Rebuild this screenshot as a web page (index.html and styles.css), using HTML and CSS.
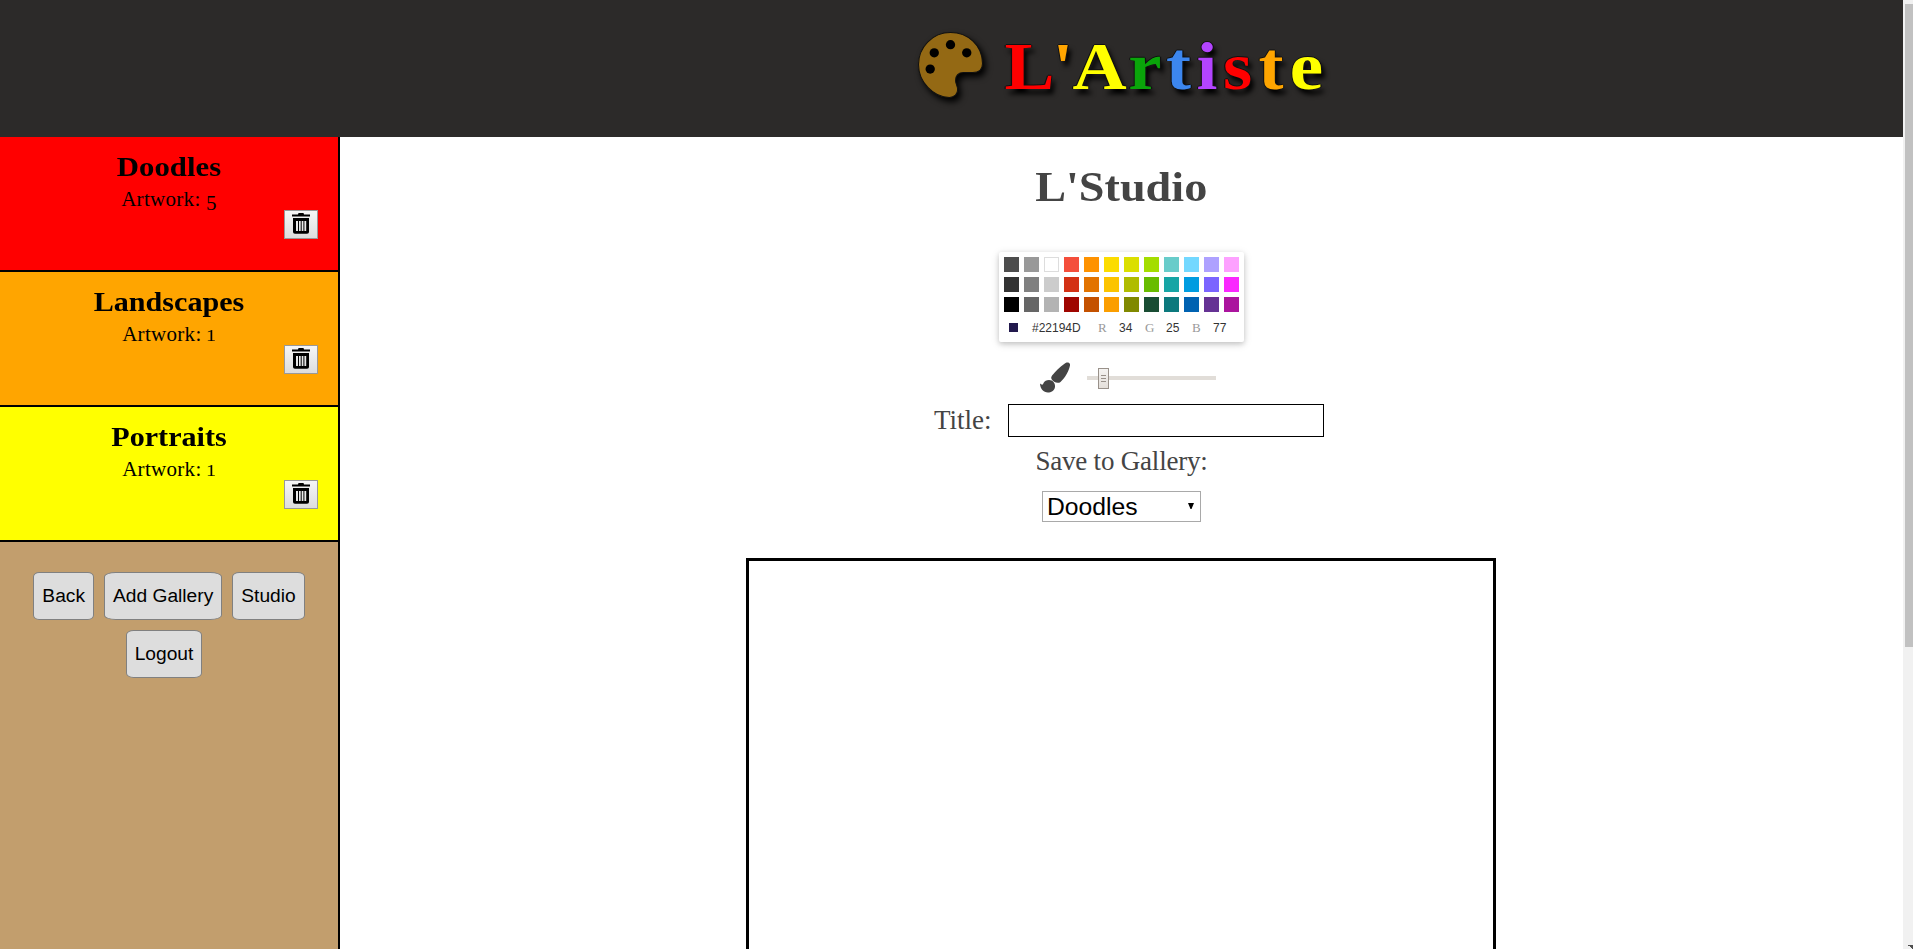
FILE: index.html
```html
<!DOCTYPE html>
<html lang="en">
<head>
<meta charset="utf-8">
<title>L'Artiste</title>
<link rel="stylesheet" href="styles.css">
</head>
<body>
<svg class="defs" width="0" height="0">
  <symbol id="trash" viewBox="0 0 18 21">
    <path d="M6 1.500 L6.500 0 H11.500 L12 1.500 H18 V3.500 H0 V1.500z"/>
    <path fill-rule="evenodd" d="M1 5 H17 V19 Q17 20.800 15 20.800 H3 Q1 20.800 1 19z M4 8 V18 H6 V8z M7 8 V18 H8.700 V8z M9.700 8 V18 H11.400 V8z M12.400 8 V18 H14.200 V8z"/>
  </symbol>
</svg>
<div class="app">
  <div class="page">
    <header class="header">
      <svg class="palette" viewBox="0 0 64 66">
        <path d="M32 .5C14 .5 .5 15 .5 32S15 64.500 31 64.500C36 64.500 39 61 39 57C39 53 37 51 37 48C37 43 40 40 45 40H54C60 40 63.500 37 63.500 31C63.500 13 49 .5 32 .5z"/>
        <circle class="hole" cx="32" cy="12.500" r="4.600"/><circle class="hole" cx="48" cy="20.500" r="4.600"/>
        <circle class="hole" cx="16" cy="20.500" r="4.600"/><circle class="hole" cx="12" cy="36.500" r="4.600"/>
      </svg>
      <h1 class="logo"><span class="l1">L</span><span class="l2">'</span><span class="l3">A</span><span class="l4">r</span><span class="l5">t</span><span class="l6">i</span><span class="l7">s</span><span class="l8">t</span><span class="l9">e</span></h1>
    </header>
    <div class="body">
      <aside class="sidebar">
        <section class="gallery red"><h2 class="doodles">Doodles</h2><p>Artwork: <span class="five">5</span></p><button class="delete"><svg><use href="#trash"/></svg></button></section>
        <section class="gallery orange"><h2>Landscapes</h2><p>Artwork: <span class="one">1</span></p><button class="delete"><svg><use href="#trash"/></svg></button></section>
        <section class="gallery yellow"><h2>Portraits</h2><p>Artwork: <span class="one">1</span></p><button class="delete"><svg><use href="#trash"/></svg></button></section>
        <nav class="actions">
          <div class="row"><button>Back</button><button>Add Gallery</button><button>Studio</button></div>
          <div class="row last"><button>Logout</button></div>
        </nav>
      </aside>
      <main class="studio">
        <h2 class="title">L'Studio</h2>
        <div class="picker">
          <div class="swatches" id="swatches"></div>
          <div class="fields"><i class="current"></i><span class="hex">#22194D</span><span class="key">R</span><span class="val">34</span><span class="key">G</span><span class="val">25</span><span class="key">B</span><span class="val">77</span></div>
        </div>
        <div class="brush">
          <svg class="brush-icon" viewBox="0 0 30 31">
            <path d="M26 .8C28 -.2 30.500 1 30 3.500C29 9 25 16 20.500 20C18 22 13 20.300 11.500 17C10.800 15.500 11.500 14 13 12.500C17 8 22 3 26 .8z"/>
            <path d="M9 18C13 18 15.500 21.500 15 25C14.300 29 11 30.500 8 30.500C3.500 30.500 .3 27 0 21.500C2 23.300 3 22.800 3.500 21C4.500 19 6.500 18 9 18z"/>
          </svg>
          <div class="slider"><div class="thumb"><i></i><i></i><i></i></div></div>
        </div>
        <div class="name"><label for="name">Title:</label><input id="name" type="text"></div>
        <div class="save">Save to Gallery:</div>
        <div class="select"><span>Doodles</span><svg viewBox="0 0 6 6"><path d="M0 0H6L3.500 6H2.500z"/></svg></div>
        <div class="canvas"></div>
      </main>
    </div>
  </div>
  <div class="scrollbar"><div class="bar"></div><svg viewBox="0 0 5 4"><path d="M0 0H5V4H4V3H3V2H2V1H0z"/></svg></div>
</div>
<script src="script.js"></script>
</body>
</html>
```

FILE: script.js
```js
const colors = ['#4D4D4D','#999999','#FFFFFF','#F44E3B','#FE9200','#FCDC00','#DBDF00','#A4DD00','#68CCCA','#73D8FF','#AEA1FF','#FDA1FF',
  '#333333','#808080','#CCCCCC','#D33115','#E27300','#FCC400','#B0BC00','#68BC00','#16A5A5','#009CE0','#7B64FF','#FA28FF',
  '#000000','#666666','#B3B3B3','#9F0500','#C45100','#FB9E00','#808900','#194D33','#0C797D','#0062B1','#653294','#AB149E'];
const box = document.getElementById('swatches');
colors.forEach(color => {
  const item = document.createElement('i');
  item.style.background = color;
  if (color === '#FFFFFF') item.className = 'white';
  box.appendChild(item);
});
```

FILE: styles.css
```css
* { box-sizing: border-box; }
body { margin: 0; font-family: Georgia, "Liberation Serif", serif; color: #444; }
h1, h2, p { margin: 0; }
button { font-family: Arial, "Liberation Sans", sans-serif; color: #000; }
.defs { display: block; position: absolute; }
.app { display: flex; height: 949px; overflow: hidden; }
.page { width: 1903px; display: flex; flex-direction: column; }
.header { height: 137px; flex: none; background: #2c2a29; padding: 32px 0 0 918px; display: flex; }
.palette { width: 65px; height: 67px; margin-right: 22px; fill: #946914; overflow: visible; filter: drop-shadow(3px 4px 3px #000); }
.palette path { stroke: #111; stroke-width: 1; }
.palette .hole { fill: #000; }
.logo { display: flex; font-size: 67px; line-height: 69px; text-shadow: -1px 0 #111, 0 -1px #111, 1px 0 #111, 3px 5px 5px #000; }
.logo span { display: flex; justify-content: center; transform: scaleX(1.12); }
.l1, .l7 { color: red; }
.l2, .l8 { color: orange; }
.l3, .l9 { color: yellow; }
.l4 { color: #0aa50a; }
.l5 { color: #3c86ee; }
.l6 { color: #b344ff; }
.l1 { width: 49px; } .l2 { width: 18px; } .l3 { width: 55px; } .l4 { width: 36px; } .l5 { width: 31px; }
.l6 { width: 26px; } .l7 { width: 35px; } .l8 { width: 32px; } .l9 { width: 39px; }
.body { flex: 1; display: flex; min-height: 0; }
.sidebar { width: 340px; flex: none; border-right: 2px solid #000; background: #c29e6d; }
.gallery { height: 135px; border-bottom: 2px solid #000; padding-top: 14px; text-align: center; color: #000; }
.gallery h2 { font-size: 27px; line-height: 32px; transform: scaleX(1.115); }
.gallery h2.doodles { transform: scaleX(1.14); }
.gallery p { font-size: 21px; line-height: 27px; padding-top: 3px; height: 27px; letter-spacing: .3px; }
.five { position: relative; top: 4px; }
.one { display: inline-block; font-size: 17px; line-height: 17px; transform: scaleX(1.2); }
.red { background: red; }
.orange { background: orange; }
.yellow { background: yellow; }
.delete { display: block; width: 34px; height: 29px; margin: 0 0 0 284px; padding: 0 0 0 7px; border: 1px solid #999; background: linear-gradient(#f6f6f6, #ddd); }
.delete svg { display: block; width: 18px; height: 21px; margin-top: -2px; }
.actions { padding-top: 30px; }
.row { display: flex; gap: 10px; justify-content: center; margin-bottom: 10px; }
.row.last { padding-right: 10px; }
.row button { height: 48px; padding: 0 8px; font-size: 19.2px; border: 1px solid #808080; border-radius: 10%; background: #ddd; }
.studio { flex: 1; display: flex; flex-direction: column; align-items: center; background: #fff; min-height: 0; }
.title { font-size: 42px; line-height: 48px; margin-top: 26px; transform: scaleX(1.1); }
.picker { width: 245px; height: 90px; margin-top: 41px; padding: 5px 0 0 5px; border-radius: 2px; box-shadow: 0 2px 10px rgba(0,0,0,.12), 0 2px 5px rgba(0,0,0,.16); flex: none; }
.swatches { display: grid; grid-template-columns: repeat(12, 15px); gap: 5px; }
.swatches i { height: 15px; }
.swatches .white { border: 1px solid #ddd; }
.fields { display: flex; align-items: center; height: 15px; margin-top: 8px; padding-left: 5px; font: 12px Arial, "Liberation Sans", sans-serif; color: #333; }
.current { width: 9px; height: 9px; background: #22194d; margin-right: 14px; }
.hex { width: 66px; }
.key { width: 21px; color: #999; font-family: Georgia, "Liberation Serif", serif; font-size: 13px; }
.val { width: 26px; }
.brush { display: flex; align-items: center; margin-top: 20px; margin-left: 13px; width: 176px; }
.brush-icon { width: 30px; height: 31px; fill: #444; margin-right: 17px; }
.slider { width: 129px; height: 4px; background: #e1ddd8; }
.thumb { width: 11px; height: 21px; margin: -8px 0 0 11px; border: 1px solid #99918a; background: linear-gradient(#f5f3f1, #e4dfda); display: flex; flex-direction: column; gap: 2px; align-items: center; justify-content: center; }
.thumb i { width: 5px; height: 1px; background: #99918a; }
.name { display: flex; width: 390px; margin: 11px 0 0 15px; }
.name label { width: 74px; font-size: 27px; line-height: 32px; }
.name input { width: 316px; height: 33px; border: 1px solid #000; }
.save { margin-top: 8px; font-size: 27px; line-height: 32px; letter-spacing: -.2px; }
.select { width: 159px; height: 32px; margin-top: 13px; border: 1px solid #a9a9a9; display: flex; align-items: center; justify-content: space-between; padding: 1px 6px 0 4px; font: 24.7px Arial, "Liberation Sans", sans-serif; color: #000; position: relative; top: 1px; }
.select svg { width: 6px; height: 6px; margin-top: -2px; }
.canvas { width: 750px; height: 500px; flex: none; margin: 37px 1px 0 0; border: 3px solid #000; }
.scrollbar { width: 10px; background: #f1f1f1; padding: 4px 0 0 2px; display: flex; flex-direction: column; }
.bar { height: 643px; background: #c1c1c1; }
.scrollbar svg { width: 5px; height: 4px; margin: auto 0 0 3px; fill: #505050; }
```
